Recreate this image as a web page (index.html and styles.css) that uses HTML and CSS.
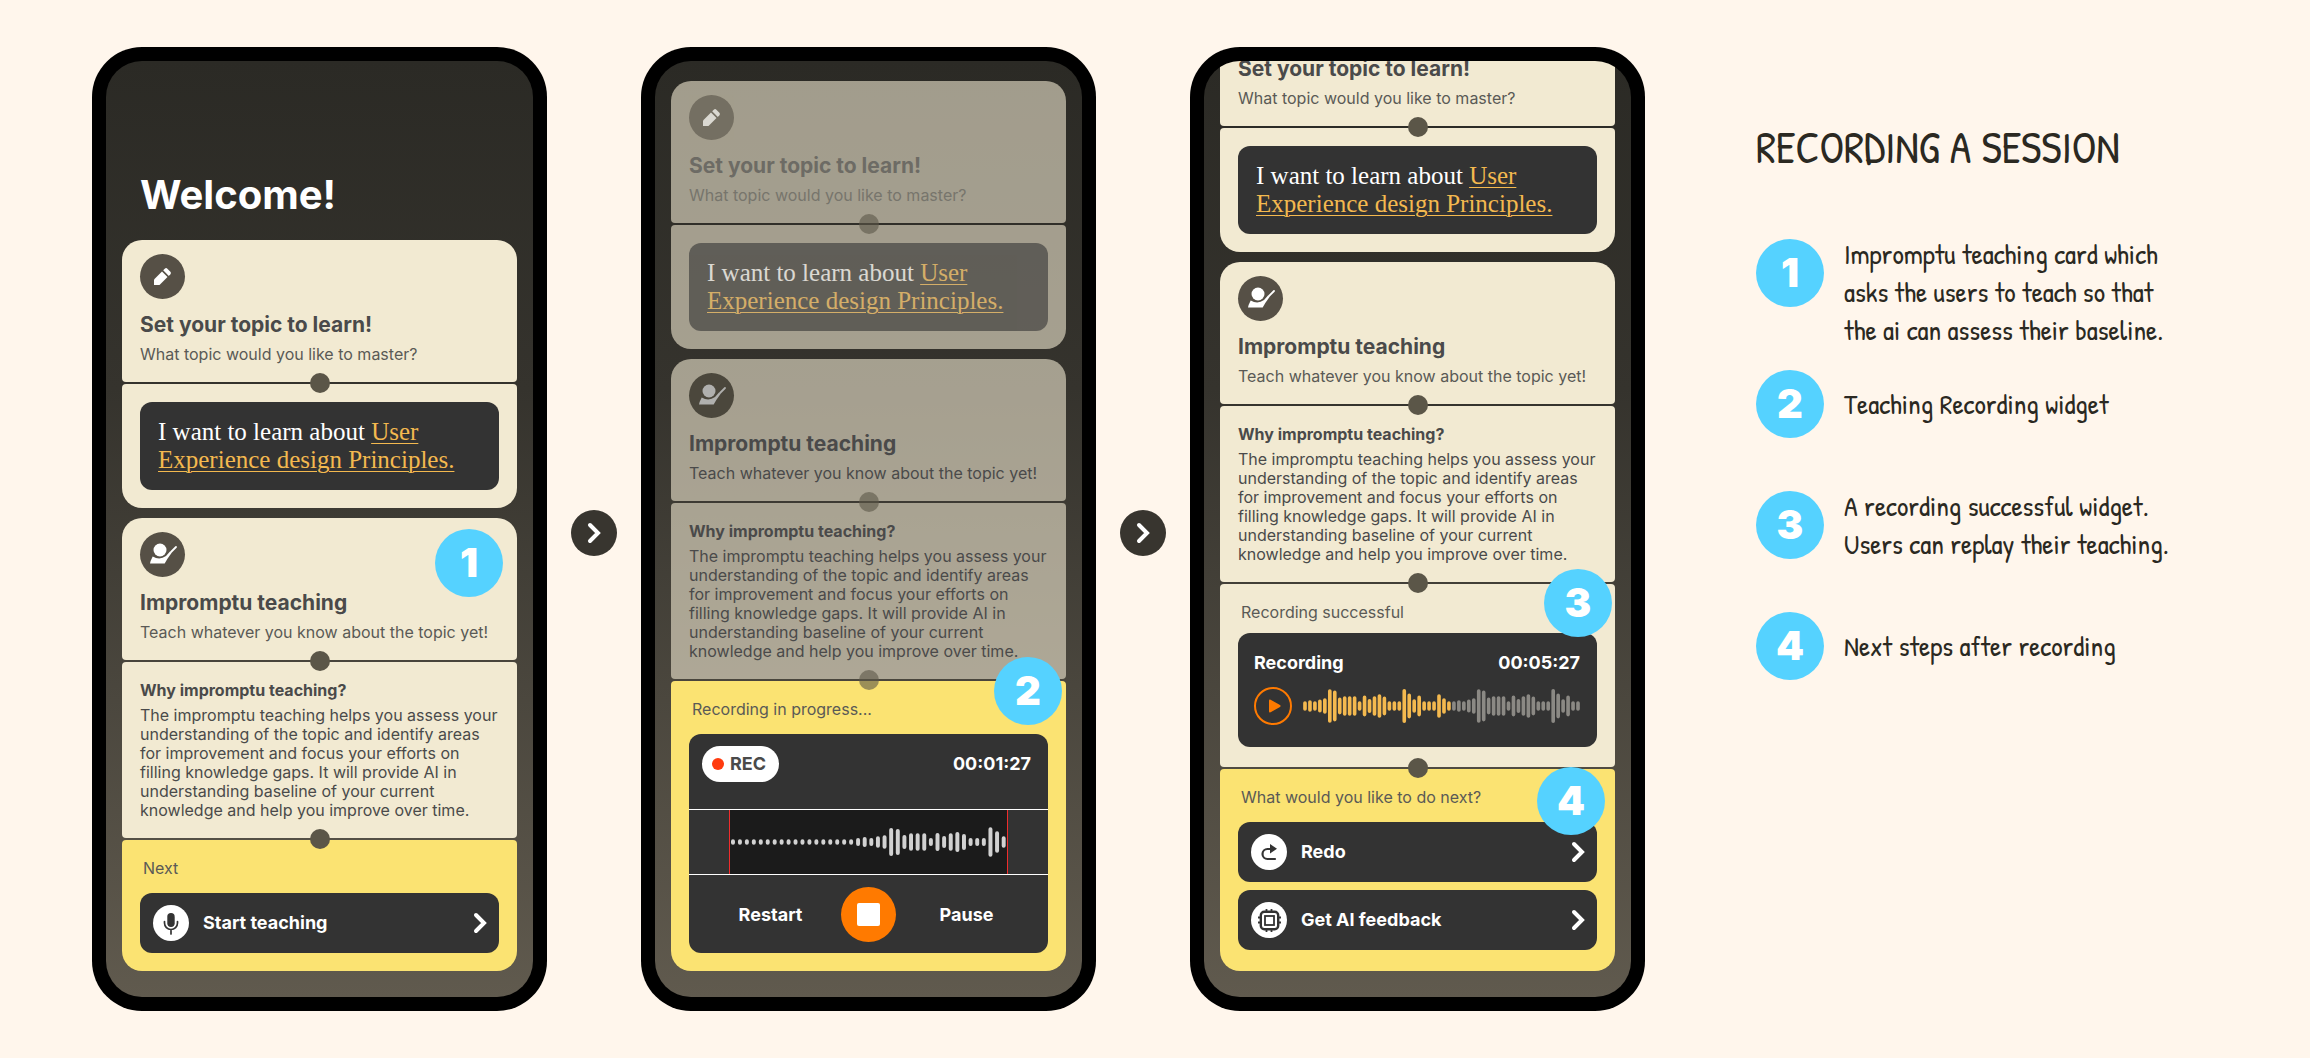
FILE: index.html
```html
<!DOCTYPE html>
<html lang="en">
<head>
  <meta charset="UTF-8" />
  <meta name="viewport" content="width=device-width, initial-scale=1.0" />
  <title>Recording a session</title>
  <link rel="stylesheet" href="styles.css">
</head>
<body>

  <!-- shared icons -->
  <svg class="sprite" aria-hidden="true">
    <symbol id="icon-pencil" viewBox="0 0 45 45">
      <path d="M14 31v-5.500l8-8 5.500 5.500-8 8z" fill="currentColor"/>
      <path d="M23.200 16.300l1.600-1.600q1.300-1.200 2.600 0l3 3q1.200 1.300 0 2.600l-1.600 1.600z" fill="currentColor"/>
    </symbol>
    <symbol id="icon-teacher" viewBox="0 0 45 45">
      <circle cx="20" cy="18" r="6.500" fill="currentColor"/>
      <path d="M10 31.500l.6-2.500 2.100-4.500q7 4.200 13.300-.5l4-4.500 1.500 1.500-4.200 6-2.600 4.500z" fill="currentColor"/>
      <path d="M31 20l5-5" stroke="currentColor" stroke-width="1.800" stroke-linecap="round"/>
    </symbol>
    <symbol id="icon-mic" viewBox="0 0 36 36">
      <rect x="14.300" y="8" width="7.400" height="14" rx="3.700" fill="currentColor"/>
      <path d="M11.500 16.500v1.500a6.500 6.500 0 0 0 13 0v-1.500M18 24.500v4.500" fill="none" stroke="currentColor" stroke-width="1.700" stroke-linecap="round"/>
    </symbol>
    <symbol id="icon-redo" viewBox="0 0 36 36">
      <path d="M24 25h-7.500a5 5 0 0 1 0-10h4" fill="none" stroke="currentColor" stroke-width="2.200" stroke-linecap="round"/>
      <path d="M19 10l7 4.800-7 4.800z" fill="currentColor"/>
    </symbol>
    <symbol id="icon-chip" viewBox="0 0 36 36">
      <rect x="9.800" y="9.800" width="17.400" height="17.400" rx="3.500" fill="none" stroke="currentColor" stroke-width="2.400"/>
      <rect x="14" y="14" width="9" height="9" fill="none" stroke="currentColor" stroke-width="1.800"/>
      <path d="M15.500 9v-2M20.500 9v-2M15.500 28v2M20.500 28v2M9 15.500h-2M9 20.500h-2M28 15.500h2M28 20.500h2" stroke="currentColor" stroke-width="1.800"/>
    </symbol>
    <symbol id="icon-chevron" viewBox="0 0 14 22">
      <path d="M3 3l8 8-8 8" fill="none" stroke="currentColor" stroke-width="4" stroke-linecap="round"/>
    </symbol>
    <symbol id="wave-part" viewBox="0 0 360 108" overflow="visible">
      <path d="M6 45v18M21 42v24M36 45v18M51 40v28M66 36v36M81 9v90M96 13v82M111 34v40M126 30v48M141 30v48M156 30v48M171 45v18M186 28v52M201 38v32M216 30v48M231 24v60M246 31v46M261 45v18M276 45v18M291 45v18M306 8v92M321 22v64M336 39v30M351 28v52" fill="none" stroke="currentColor" stroke-width="11" stroke-linecap="round"/>
    </symbol>
  </svg>

  <main class="board">

    <!-- Screen 1: home -->
    <section class="phone">
      <div class="screen">
        <h1 class="welcome">Welcome!</h1>

        <div class="card">
          <div class="panel header">
            <span class="icon"><svg><use href="#icon-pencil"/></svg></span>
            <h2>Set your topic to learn!</h2>
            <p>What topic would you like to master?</p>
          </div>
          <div class="joint"></div>
          <div class="panel">
            <p class="topic">I want to learn about <a href="#">User Experience design Principles.</a></p>
          </div>
        </div>

        <div class="card">
          <span class="badge badge-1">1</span>
          <div class="panel header">
            <span class="icon"><svg><use href="#icon-teacher"/></svg></span>
            <h2>Impromptu teaching</h2>
            <p>Teach whatever you know about the topic yet!</p>
          </div>
          <div class="joint"></div>
          <div class="panel why">
            <h3>Why impromptu teaching?</h3>
            <p>The impromptu teaching helps you assess your understanding of the topic and identify areas for improvement and focus your efforts on filling knowledge gaps. It will provide AI in understanding baseline of your current knowledge and help you improve over time.</p>
          </div>
          <div class="joint"></div>
          <div class="panel active">
            <p class="label">Next</p>
            <button class="action" type="button">
              <span class="action-icon"><svg><use href="#icon-mic"/></svg></span>
              Start teaching
              <svg class="chevron"><use href="#icon-chevron"/></svg>
            </button>
          </div>
        </div>
      </div>
    </section>

    <span class="arrow"><svg class="chevron"><use href="#icon-chevron"/></svg></span>

    <!-- Screen 2: recording -->
    <section class="phone">
      <div class="screen">
        <div class="card faded">
          <div class="panel header sheer dim">
            <span class="icon"><svg><use href="#icon-pencil"/></svg></span>
            <h2>Set your topic to learn!</h2>
            <p>What topic would you like to master?</p>
          </div>
          <div class="joint"></div>
          <div class="panel sheer dim">
            <p class="topic">I want to learn about <a href="#">User Experience design Principles.</a></p>
          </div>
        </div>

        <div class="card faded">
          <div class="panel header sheer current">
            <span class="icon"><svg><use href="#icon-teacher"/></svg></span>
            <h2>Impromptu teaching</h2>
            <p>Teach whatever you know about the topic yet!</p>
          </div>
          <div class="joint"></div>
          <div class="panel why sheer">
            <h3>Why impromptu teaching?</h3>
            <p>The impromptu teaching helps you assess your understanding of the topic and identify areas for improvement and focus your efforts on filling knowledge gaps. It will provide AI in understanding baseline of your current knowledge and help you improve over time.</p>
          </div>
          <div class="joint"></div>
          <div class="panel active">
            <span class="badge badge-2">2</span>
            <p class="label">Recording in progress...</p>
            <div class="recorder">
              <div class="recorder-top">
                <span class="rec">REC</span>
                <time>00:01:27</time>
              </div>
              <div class="track">
                <svg class="live-wave" viewBox="0 0 837 192" preserveAspectRatio="none" aria-hidden="true">
                  <path d="M9 94v4M30 94v4M51 94v4M72 94v4M93 94v4M114 94v4M135 94v4M156 94v4M177 94v4M198 94v4M219 94v4M240 94v4M261 94v4M282 94v4M303 94v4M324 94v4M345 94v4M366 94v4M387 90v12M407 87v18M427 90v12M447 85v22M467 82v28M487 60v72M507 63v66M527 81v30M547 76v40M567 76v40M587 76v40M607 90v12M627 75v42M647 84v24M667 76v40M687 72v48M707 78v36M727 90v12M747 90v12M767 90v12M787 58v76M807 70v52M827 85v22"/>
                </svg>
              </div>
              <div class="controls">
                <button type="button">Restart</button>
                <button type="button" class="stop" aria-label="Stop"></button>
                <button type="button">Pause</button>
              </div>
            </div>
          </div>
        </div>
      </div>
    </section>

    <span class="arrow"><svg class="chevron"><use href="#icon-chevron"/></svg></span>

    <!-- Screen 3: recording done, scrolled down -->
    <section class="phone">
      <div class="screen">
        <div class="card">
          <div class="panel header">
            <span class="icon"><svg><use href="#icon-pencil"/></svg></span>
            <h2>Set your topic to learn!</h2>
            <p>What topic would you like to master?</p>
          </div>
          <div class="joint"></div>
          <div class="panel">
            <p class="topic">I want to learn about <a href="#">User Experience design Principles.</a></p>
          </div>
        </div>

        <div class="card">
          <div class="panel header">
            <span class="icon"><svg><use href="#icon-teacher"/></svg></span>
            <h2>Impromptu teaching</h2>
            <p>Teach whatever you know about the topic yet!</p>
          </div>
          <div class="joint"></div>
          <div class="panel why">
            <h3>Why impromptu teaching?</h3>
            <p>The impromptu teaching helps you assess your understanding of the topic and identify areas for improvement and focus your efforts on filling knowledge gaps. It will provide AI in understanding baseline of your current knowledge and help you improve over time.</p>
          </div>
          <div class="joint"></div>
          <div class="panel result">
            <span class="badge badge-3">3</span>
            <p class="label">Recording successful</p>
            <div class="player">
              <div class="player-top">
                <span>Recording</span>
                <time>00:05:27</time>
              </div>
              <div class="player-row">
                <button type="button" class="play" aria-label="Play">
                  <svg viewBox="0 0 12 14"><path d="M0 1.800q0-1.800 1.600-1.100l9.400 5.200q1.200 1.100 0 2.200l-9.400 5.200q-1.600.6-1.600-1.100z" fill="currentColor"/></svg>
                </button>
                <svg class="wave" viewBox="0 0 837 108" aria-hidden="true">
                  <g class="played">
                    <use href="#wave-part" width="360" height="108"/>
                    <path d="M366 45v18M381 45v18M396 45v18M411 24v60M426 36v36M441 45v18"/>
                  </g>
                  <g class="rest">
                    <use href="#wave-part" x="450" width="360" height="108"/>
                    <path d="M816 45v18M831 45v18"/>
                  </g>
                </svg>
              </div>
            </div>
          </div>
          <div class="joint"></div>
          <div class="panel active next">
            <span class="badge badge-4">4</span>
            <p class="label">What would you like to do next?</p>
            <button class="action" type="button">
              <span class="action-icon"><svg><use href="#icon-redo"/></svg></span>
              Redo
              <svg class="chevron"><use href="#icon-chevron"/></svg>
            </button>
            <button class="action" type="button">
              <span class="action-icon"><svg><use href="#icon-chip"/></svg></span>
              Get AI feedback
              <svg class="chevron"><use href="#icon-chevron"/></svg>
            </button>
          </div>
        </div>
      </div>
    </section>

    <aside class="notes">
      <h2>RECORDING A SESSION</h2>
      <ol>
        <li><span class="badge">1</span><p>Impromptu teaching card which<br>asks the users to teach so that<br>the ai can assess their baseline.</p></li>
        <li><span class="badge">2</span><p>Teaching Recording widget</p></li>
        <li><span class="badge">3</span><p>A recording successful widget.<br>Users can replay their teaching.</p></li>
        <li><span class="badge">4</span><p>Next steps after recording</p></li>
      </ol>
    </aside>

  </main>

</body>
</html>
```
FILE: styles.css
```css
* { margin: 0; padding: 0; box-sizing: border-box; }
body {
  font-family: Inter, sans-serif;
  font-size: 16px;
  line-height: 20px;
  color: #4a4a4a;
  background-color: #fff6ec;
}
button {
  font: inherit;
  color: inherit;
  background: none;
  border: none;
  cursor: pointer;
}
.sprite {
  display: none;
}
.board {
  display: flex;
  align-items: center;
  min-height: 100vh;
  padding: 47px 92px;
}

/* phone */
.phone {
  flex: 0 1 455px;
  min-width: 0;
  height: calc(100vh - 94px);
  padding: 14px;
  background-color: #000;
  border-radius: 50px;
}
.screen {
  height: 100%;
  padding: 0 16px 26px;
  display: flex;
  flex-direction: column;
  justify-content: flex-end;
  gap: 10px;
  overflow: hidden;
  background: linear-gradient(#2b2a25, #35332d 35%, #605a4e);
  border-radius: 36px;
}
.welcome {
  margin: 0 18px 11px;
  font-size: 40px;
  line-height: 48px;
  color: white;
}
.arrow {
  flex: none;
  display: flex;
  justify-content: center;
  align-items: center;
  width: 46px;
  height: 46px;
  margin: 8px 24px 0;
  border-radius: 50%;
  background-color: #38352f;
  color: white;
}
.chevron {
  width: 14px;
  height: 22px;
}

/* cards */
.card {
  position: relative;
  flex: none;
}
.panel {
  position: relative;
  padding: 18px;
  background-color: #f2ead2;
  border-radius: 4px;
}
.panel:first-of-type {
  border-top-left-radius: 20px;
  border-top-right-radius: 20px;
}
.panel:last-child {
  border-bottom-left-radius: 20px;
  border-bottom-right-radius: 20px;
}
.joint {
  position: relative;
  z-index: 1;
  height: 2px;
}
.joint::before {
  content: "";
  position: absolute;
  left: calc(50% - 10px);
  top: -9px;
  width: 20px;
  height: 20px;
  border-radius: 50%;
  background-color: #5b5648;
}
.header {
  padding-top: 14px;
}
.icon {
  display: block;
  width: 45px;
  height: 45px;
  margin-bottom: 14px;
  border-radius: 50%;
  background-color: #565046;
  color: white;
}
.icon svg,
.action-icon svg {
  display: block;
  width: 100%;
  height: 100%;
}
.header h2 {
  margin-bottom: 7px;
  font-size: 21px;
  line-height: 24px;
}
.header p,
.label {
  color: #5a5a56;
}
.topic {
  padding: 16px 18px;
  font-family: "Liberation Serif", serif;
  font-size: 25px;
  line-height: 28px;
  color: white;
  background-color: #333;
  border-radius: 12px;
}
.topic a {
  color: #f4b94f;
  text-decoration-thickness: 1px;
  text-underline-offset: 3px;
}
.why h3 {
  margin-bottom: 6px;
  font-size: 16px;
}
.why p {
  line-height: 19px;
}
.active {
  background-color: #fbe372;
}
.label {
  padding-left: 3px;
  margin-bottom: 15px;
}
.result {
  padding-bottom: 20px;
}
.result .label {
  margin-bottom: 11px;
}
.next {
  padding-bottom: 21px;
}
.action {
  display: flex;
  align-items: center;
  width: 100%;
  height: 60px;
  padding: 0 12px 0 13px;
  font-size: 18px;
  font-weight: bold;
  color: white;
  background-color: #333;
  border-radius: 12px;
}
.action + .action {
  margin-top: 8px;
}
.action .chevron {
  margin-left: auto;
}
.action-icon {
  width: 36px;
  height: 36px;
  margin-right: 14px;
  border-radius: 50%;
  background-color: white;
  color: #333;
}

/* cards behind the recording widget */
.sheer {
  background-color: rgba(242, 234, 210, 0.6);
}
.dim > * {
  opacity: 0.6;
}
.current .icon {
  background-color: #4b473c;
  color: #b0b0ae;
}
.current p {
  color: #4a4a4a;
}
.faded .joint::before {
  opacity: 0.6;
}

/* recording widget */
.recorder {
  color: white;
  background-color: #333;
  border-radius: 12px;
  font-size: 18px;
  font-weight: bold;
}
.recorder-top {
  display: flex;
  justify-content: space-between;
  align-items: center;
  padding: 12px 17px 27px 13px;
}
.rec {
  display: flex;
  align-items: center;
  gap: 6px;
  height: 36px;
  padding: 0 13px 0 10px;
  color: #4a4a4a;
  background-color: white;
  border-radius: 18px;
}
.rec::before {
  content: "";
  width: 12px;
  height: 12px;
  border-radius: 50%;
  background-color: #ff3b0f;
}
.track {
  padding: 0 40px;
  border-top: 1px solid white;
  border-bottom: 1px solid white;
}
.live-wave {
  display: block;
  width: 100%;
  height: 64px;
  background-color: #1b1b1b;
  border-left: 1px solid #f02c2c;
  border-right: 1px solid #f02c2c;
}
.live-wave path {
  fill: none;
  stroke: #d2d2d2;
  stroke-width: 12;
  stroke-linecap: round;
}
.controls {
  display: grid;
  grid-template-columns: repeat(3, 98px);
  justify-content: center;
  justify-items: center;
  align-items: center;
  padding: 12px 0 11px;
}
.stop {
  display: flex;
  justify-content: center;
  align-items: center;
  width: 55px;
  height: 55px;
  border-radius: 50%;
  background-color: #ff7a00;
}
.stop::before {
  content: "";
  width: 23px;
  height: 23px;
  border-radius: 2px;
  background-color: white;
}

/* playback widget */
.player {
  padding: 20px 17px 22px 16px;
  color: white;
  background-color: #333;
  border-radius: 12px;
}
.player-top {
  display: flex;
  justify-content: space-between;
  margin-bottom: 14px;
  font-size: 18px;
  font-weight: bold;
}
.player-row {
  display: flex;
  align-items: center;
  gap: 11px;
}
.play {
  flex: none;
  display: flex;
  justify-content: center;
  align-items: center;
  width: 38px;
  height: 38px;
  padding-left: 3px;
  border: 2px solid #ff7a00;
  border-radius: 50%;
  color: #ff7a00;
}
.play svg {
  width: 12px;
  height: 14px;
}
.wave {
  flex: 1;
  min-width: 0;
  height: 36px;
}
.wave path {
  fill: none;
  stroke: currentColor;
  stroke-width: 11;
  stroke-linecap: round;
}
.played { color: #f4b94f; }
.rest { color: #8b8984; }

/* numbered markers */
.badge {
  flex: none;
  display: flex;
  justify-content: center;
  align-items: center;
  width: 68px;
  height: 68px;
  border-radius: 50%;
  background-color: #55d2ff;
  font-size: 40px;
  font-weight: 900;
  color: white;
}
.card .badge {
  position: absolute;
  z-index: 2;
}
.badge-1 { top: 11px; right: 14px; }
.badge-2 { top: -24px; right: 4px; }
.badge-3 { top: -15px; right: 3px; }
.badge-4 { top: -2px; right: 10px; }

/* notes */
.notes {
  flex: 1;
  align-self: flex-start;
  margin-left: 111px;
  padding-top: 76px;
  font-family: "Patrick Hand", Lato, sans-serif;
  color: #2b2922;
}
.notes h2 {
  margin-bottom: 64px;
  font-size: 44px;
  font-weight: normal;
  line-height: 48px;
}
.notes ol {
  list-style: none;
}
.notes li {
  display: flex;
  align-items: center;
  gap: 20px;
  margin-bottom: 49px;
}
.notes li:first-child {
  align-items: flex-start;
  margin-bottom: 21px;
}
.notes li:first-child .badge {
  margin-top: 4px;
}
.notes p {
  font-size: 28px;
  line-height: 38px;
}
.notes .badge {
  font-family: Inter, sans-serif;
}
```
